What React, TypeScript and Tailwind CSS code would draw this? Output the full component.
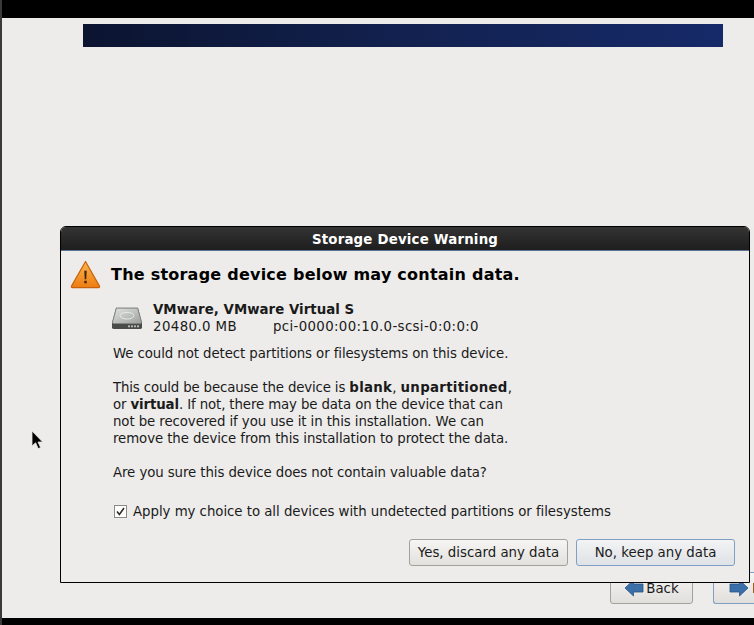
import React from "react";

const font = { fontFamily: '"DejaVu Sans", sans-serif' };

function WarningIcon() {
  return (
    <svg width="31" height="29" viewBox="0 0 32 30" className="shrink-0">
      <defs>
        <linearGradient id="warn" x1="0" y1="0" x2="0" y2="1">
          <stop offset="0" stopColor="#fbb450" />
          <stop offset="1" stopColor="#ee7d12" />
        </linearGradient>
      </defs>
      <path d="M16 1.5 L30.5 27 Q31 28.5 29.5 28.5 L2.5 28.5 Q1 28.5 1.5 27 Z" fill="url(#warn)" stroke="#c8610c" strokeWidth="1.2" strokeLinejoin="round" />
      <path d="M14.8 11 h2.4 l-.4 9 h-1.6 z" fill="#3a2408" />
      <rect x="14.8" y="21.5" width="2.4" height="2.6" fill="#3a2408" />
    </svg>
  );
}

function DiskIcon() {
  return (
    <svg width="32" height="24" viewBox="0 0 32 26" preserveAspectRatio="none" className="shrink-0">
      <defs>
        <linearGradient id="disk" x1="0" y1="0" x2="1" y2="1">
          <stop offset="0" stopColor="#e2e4e0" />
          <stop offset="1" stopColor="#9b9e9a" />
        </linearGradient>
      </defs>
      <path d="M5 2 H27 L31 18 V23 Q31 25 29 25 H3 Q1 25 1 23 V18 Z" fill="#4a4c4a" />
      <path d="M5.5 2.5 H26.5 L30.5 18 Q30.5 19 29 19 H3 Q1.5 19 1.5 18 Z" fill="url(#disk)" stroke="#8a8c88" strokeWidth="0.6" />
      <ellipse cx="16" cy="10.5" rx="7" ry="3.6" fill="none" stroke="#f2f2f0" strokeWidth="0.8" />
      <rect x="17" y="21" width="2" height="2" fill="#b8bab6" />
      <rect x="20" y="21" width="2" height="2" fill="#b8bab6" />
      <rect x="23" y="21" width="2" height="2" fill="#b8bab6" />
      <rect x="26" y="21" width="2" height="2" fill="#b8bab6" />
    </svg>
  );
}

function ArrowIcon({ left }: { left?: boolean }) {
  return (
    <svg width="20" height="18" viewBox="0 0 20 18" className="shrink-0" style={left ? undefined : { transform: "scaleX(-1)" }}>
      <path d="M1 9 L9.5 1 V5 H19 V13 H9.5 V17 Z" fill="#3b6fa8" stroke="#2a5486" strokeWidth="0.8" strokeLinejoin="round" />
    </svg>
  );
}

function Cursor() {
  return (
    <svg width="14" height="20" viewBox="0 0 14 20">
      <path d="M1 1 V16 L4.6 12.8 L7.2 18.6 L9.6 17.6 L7 12 H11.6 Z" fill="#000" stroke="#e4e4e2" strokeWidth="0.8" />
    </svg>
  );
}

export default function App() {
  return (
    <div className="relative w-[754px] h-[625px] overflow-hidden flex flex-col bg-[#edecea] text-[13.33px] leading-[17px] text-[#1a1a1a]" style={font}>
      <div className="h-[18px] shrink-0 bg-black" />
      <div className="flex-1 flex flex-col pl-[83px] pr-[31px] pt-[6px]">
        <div className="h-[23px] w-[640px] bg-gradient-to-r from-[#0b1430] via-[#12214f] to-[#162a69]" />
        <div className="mt-auto mb-[14px] flex gap-[20px] self-end -mr-[31px] w-[144px]">
          <div className="w-[83px] h-[32px] shrink-0 rounded-[3px] border border-[#a3a19c] bg-gradient-to-b from-[#f6f5f3] to-[#e0dfdc] flex items-center justify-center gap-[2px]">
            <ArrowIcon left />
            <span>Back</span>
          </div>
          <div className="w-[60px] h-[32px] shrink-0 rounded-l-[3px] border border-r-0 border-[#7f9fc4] bg-gradient-to-b from-[#f6f5f3] to-[#e0dfdc] flex items-center pl-[15px] gap-[3px]">
            <ArrowIcon />
            <span>Next</span>
          </div>
        </div>
      </div>
      <div className="h-[7px] shrink-0 bg-black" />

      {/* left edge of the root window */}
      <div className="absolute left-0 top-0 bottom-0 w-[2px] bg-[#3a3a3a]" />

      <div className="absolute left-[31px] top-[430px]">
        <Cursor />
      </div>

      {/* modal */}
      <div className="absolute left-[60px] top-[226px] w-[690px] h-[357px] flex flex-col rounded-t-[6px] border border-black bg-[#edecea]">
        <div className="h-[24px] shrink-0 pt-[2px] rounded-t-[5px] border-b border-[#5a7291] bg-gradient-to-b from-[#343434] to-[#1e1e1e] flex items-center justify-center text-white font-bold tracking-[0.2px]">
          Storage Device Warning
        </div>
        <div className="flex-1 flex flex-col pl-[9px] pr-[14px]">
          <div className="flex items-center gap-[10px] pt-[9px]">
            <WarningIcon />
            <h1 className="text-[16px] leading-[20px] tracking-[0.23px] font-bold text-black">The storage device below may contain data.</h1>
          </div>
          <div className="flex items-center gap-[10px] pl-[41px] mt-[12px]">
            <DiskIcon />
            <div>
              <div className="font-bold tracking-[0.04px]">VMware, VMware Virtual S</div>
              <div className="flex">
                <span className="w-[120px] tracking-[0.4px]">20480.0 MB</span>
                <span className="tracking-[0.35px]">pci-0000:00:10.0-scsi-0:0:0:0</span>
              </div>
            </div>
          </div>
          <div className="pl-[43px] mt-[10px] tracking-[-0.09px]">
            <p>We could not detect partitions or filesystems on this device.</p>
            <p className="mt-[17px]">
              <span className="tracking-[-0.15px]">This could be because the device is </span>
              <b className="tracking-[0.3px]">blank</b>, <b className="tracking-[0.3px]">unpartitioned</b>,
              <br />
              <span className="tracking-[-0.12px]">
                or <b>virtual</b>. If not, there may be data on the device that can
              </span>
              <br />
              not be recovered if you use it in this installation. We can
              <br />
              remove the device from this installation to protect the data.
            </p>
            <p className="mt-[17px]">Are you sure this device does not contain valuable data?</p>
          </div>
          <div className="flex items-center gap-[6px] pl-[44px] mt-[22px]">
            <span className="w-[13px] h-[13px] border border-[#8b8a86] bg-white flex items-center justify-center">
              <svg width="11" height="11" viewBox="0 0 11 11">
                <path d="M2 5.5 L4.4 8.5 L9 2" fill="none" stroke="#2a2a2a" strokeWidth="1.6" />
              </svg>
            </span>
            <span className="tracking-[-0.04px]">Apply my choice to all devices with undetected partitions or filesystems</span>
          </div>
          <div className="flex justify-end gap-[8px] mt-[19px]">
            <div className="w-[159px] h-[27px] rounded-[3px] border border-[#a3a19c] bg-gradient-to-b from-[#f6f5f3] to-[#e2e1de] flex items-center justify-center">
              Yes, discard any data
            </div>
            <div className="w-[159px] h-[27px] rounded-[3px] border border-[#7f9fc4] bg-gradient-to-b from-[#f2f3f4] to-[#dfe2e6] flex items-center justify-center">
              No, keep any data
            </div>
          </div>
        </div>
      </div>
    </div>
  );
}
